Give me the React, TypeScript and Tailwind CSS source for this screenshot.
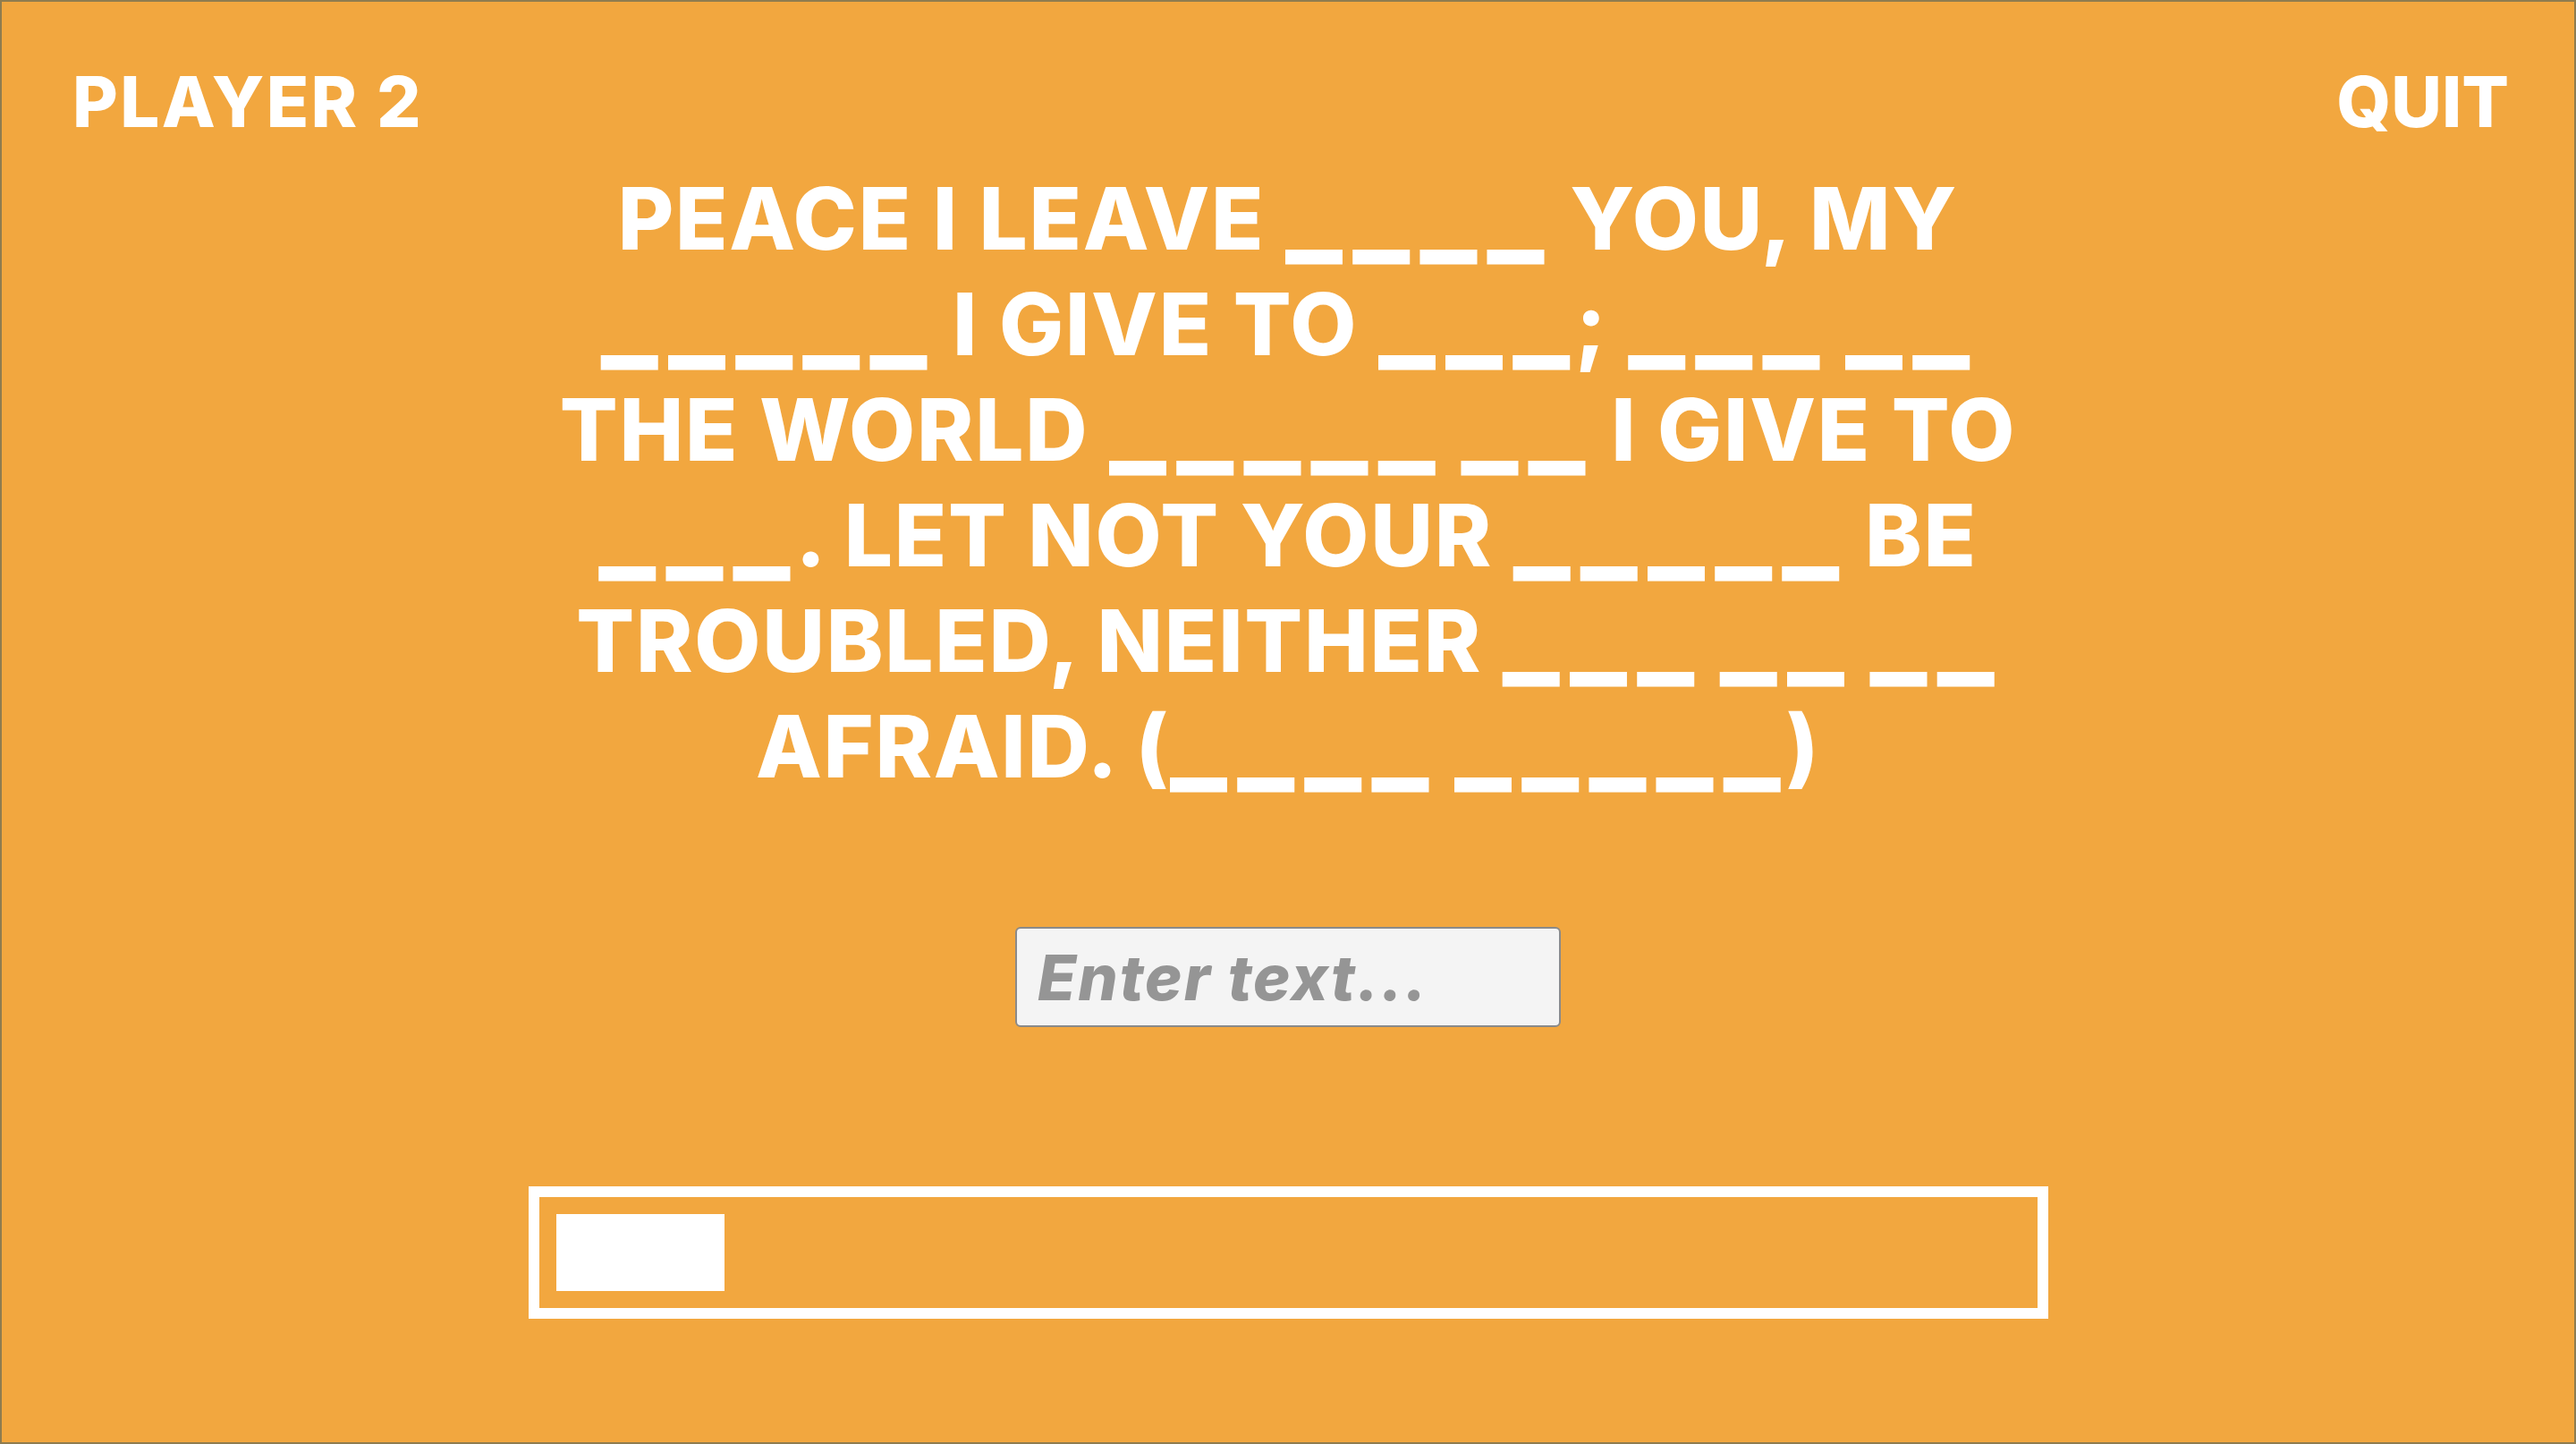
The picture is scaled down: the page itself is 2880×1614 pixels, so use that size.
const verse = [
	'PEACE I LEAVE ____ YOU, MY',
	'_____ I GIVE TO ___; ___ __',
	'THE WORLD _____ __ I GIVE TO',
	'___. LET NOT YOUR _____ BE',
	'TROUBLED, NEITHER ___ __ __',
	'AFRAID. (____ _____)',
]

function VerseLine({ text }: { text: string }) {
	// blanks are runs of underscores; draw them bigger and spaced out so each one reads as a slot
	const parts = text.split(/(_+)/)
	return (
		<div>
			{parts.map((part, i) =>
				part.startsWith('_') ? (
					<span key={i} className="text-[132px] leading-[0] tracking-[0.085em] mr-[-0.04em]">
						{part}
					</span>
				) : (
					<span key={i}>{part}</span>
				)
			)}
		</div>
	)
}

export default function App() {
	return (
		<div
			className="w-full h-[1614px] bg-[#f2a73f] border-2 border-[#8f7c4f] flex flex-col items-center text-white overflow-hidden"
			style={{ fontFamily: 'Inter, "Noto Sans", sans-serif' }}
		>
			<div className="w-full flex justify-between items-start pt-[73px] pl-[79px] pr-[73px]">
				<span className="text-[78px] leading-none font-extrabold tracking-[0.03em]">PLAYER 2</span>
				<button className="text-[78px] leading-none font-extrabold">QUIT</button>
			</div>

			<div className="mt-[32px] w-[1680px] text-center text-[96px] leading-[118px] font-extrabold tracking-[0.018em]">
				{verse.map((line, i) => (
					<VerseLine key={i} text={line} />
				))}
			</div>

			<input
				type="text"
				placeholder="Enter text..."
				className="mt-[143px] w-[610px] h-[112px] bg-[#f4f4f4] border-2 border-[#8a8a8a] rounded-[6px] pl-[23px] text-[70px] font-extrabold italic tracking-[0.03em] text-[#555] placeholder:text-[#959595] outline-none"
			/>

			<div className="mt-[178px] w-[1699px] h-[148px] border-[12px] border-white p-[19px] flex items-center">
				<div className="w-[188px] h-[86px] bg-white" />
			</div>
		</div>
	)
}
